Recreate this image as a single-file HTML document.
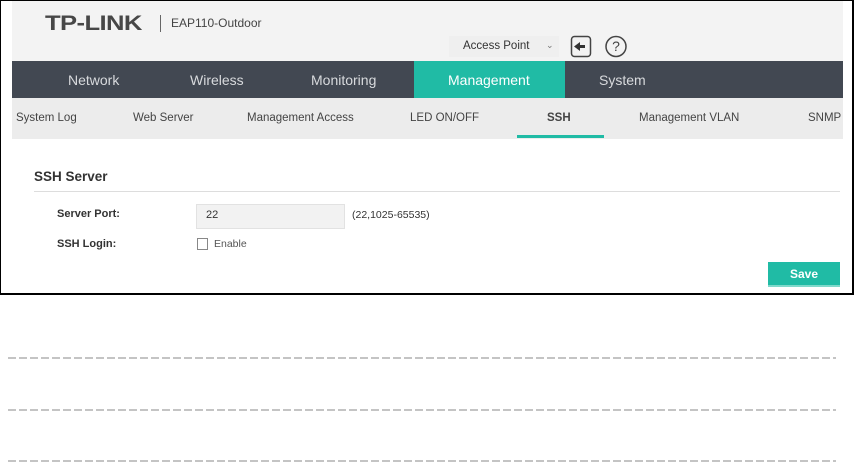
<!DOCTYPE html>
<html><head><meta charset="utf-8"><style>
*{margin:0;padding:0;box-sizing:border-box}
body{width:854px;height:464px;background:#fff;font-family:"Liberation Sans",sans-serif;position:relative;overflow:hidden}
.frame{position:absolute;left:0;top:0;width:854px;height:295px;border:1px solid #000;border-right-width:2px;border-bottom-width:2px;}
.hdr{position:absolute;left:12px;top:1px;width:831px;height:60px;background:#f3f3f3}
.nav{position:absolute;left:12px;top:61px;width:831px;height:37px;background:#424852}
.nav span{position:absolute;top:0;height:37px;line-height:38px;color:#d8dadd;font-size:14px}
.sub{position:absolute;left:12px;top:98px;width:831px;height:41px;background:#ececec}
.sub span{position:absolute;top:14px;font-size:11.5px;color:#444}
.a{position:absolute;font-size:11px;color:#333}
.dash{position:absolute;left:8px;width:828px;height:2px;background:repeating-linear-gradient(90deg,#c4c4c4 0 8px,transparent 8px 11px)}
</style></head><body>
<div class="frame"></div>
<div class="hdr"></div>
<div class="a" style="left:45px;top:12px;font-size:21px;font-weight:bold;color:#474747;letter-spacing:-0.5px;transform:scaleX(1.22);transform-origin:left">TP-LINK</div>
<div style="position:absolute;left:160px;top:15px;width:1px;height:17px;background:#666"></div>
<div class="a" style="left:171px;top:16px;font-size:12px;color:#444">EAP110-Outdoor</div>
<div style="position:absolute;left:449px;top:36px;width:110px;height:21px;background:#efefef"></div>
<div class="a" style="left:463px;top:40px;font-size:11.5px;color:#333">Access Point</div>
<div class="a" style="left:546px;top:40px;font-size:9px;color:#777">⌄</div>
<svg style="position:absolute;left:570px;top:35px" width="22" height="23" viewBox="0 0 22 23"><rect x="1.5" y="1.5" width="19" height="20" rx="3" fill="none" stroke="#444" stroke-width="1.5"/><path d="M4 11.5 L10 7 V10 H15 V13 H10 V16 Z" fill="#333"/></svg>
<svg style="position:absolute;left:604px;top:35px" width="24" height="23" viewBox="0 0 24 23"><circle cx="12" cy="11.5" r="10" fill="none" stroke="#444" stroke-width="1.5"/><text x="12" y="16" text-anchor="middle" font-size="14" font-family="Liberation Sans" fill="#444">?</text></svg>
<div class="nav">
<span style="left:56px">Network</span>
<span style="left:178px">Wireless</span>
<span style="left:299px">Monitoring</span>
<span style="left:402px;width:151px;background:#20bba5;color:#fff;padding-left:34px">Management</span>
<span style="left:587px">System</span>
</div>
<div class="sub">
<span style="left:4px">System Log</span>
<span style="left:121px">Web Server</span>
<span style="left:235px">Management Access</span>
<span style="left:398px">LED ON/OFF</span>
<span style="left:535px;font-weight:bold">SSH</span>
<span style="left:627px">Management VLAN</span>
<span style="left:796px">SNMP</span>
<div style="position:absolute;left:505px;top:37px;width:87px;height:3px;background:#20bba5"></div>
</div>
<div class="a" style="left:34px;top:169px;font-size:13.5px;font-weight:bold;color:#333">SSH Server</div>
<div style="position:absolute;left:34px;top:191px;width:806px;height:1px;background:#ddd"></div>
<div class="a" style="left:57px;top:208px;font-weight:bold">Server Port:</div>
<div style="position:absolute;left:196px;top:204px;width:149px;height:25px;background:#f2f2f2;border:1px solid #e2e2e2"></div>
<div class="a" style="left:206px;top:209px">22</div>
<div class="a" style="left:352px;top:209px;font-size:10.5px">(22,1025-65535)</div>
<div class="a" style="left:57px;top:238px;font-weight:bold">SSH Login:</div>
<div style="position:absolute;left:197px;top:238px;width:11px;height:12px;border:1px solid #888;background:#fff"></div>
<div class="a" style="left:214px;top:238px;font-size:10.5px;color:#555">Enable</div>
<div style="position:absolute;left:768px;top:262px;width:72px;height:25px;background:#20bba5;border-bottom:2px solid #7fd9cb;color:#fff;font-size:12px;font-weight:bold;text-align:center;line-height:24px">Save</div>
<div class="dash" style="top:357px"></div>
<div class="dash" style="top:409px"></div>
<div class="dash" style="top:460px"></div>
</body></html>
